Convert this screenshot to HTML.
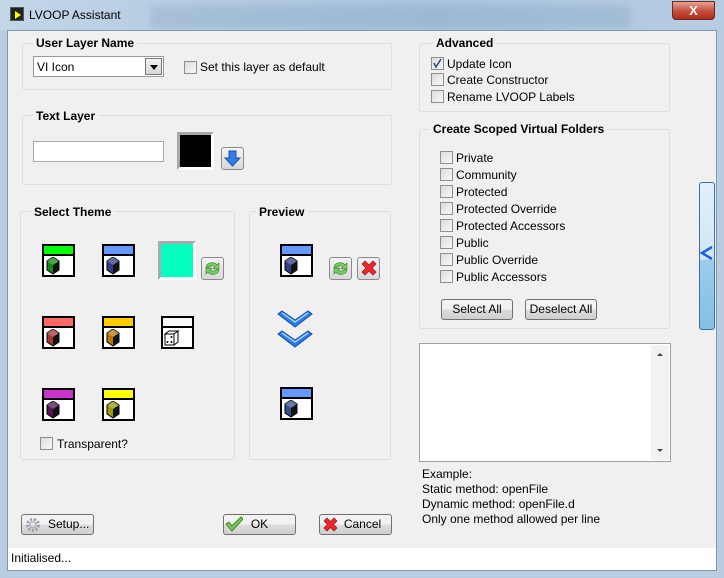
<!DOCTYPE html>
<html><head><meta charset="utf-8"><style>
*{margin:0;padding:0;box-sizing:border-box}
body{width:724px;height:578px;overflow:hidden;position:relative;font-family:"Liberation Sans",sans-serif;font-size:12px;color:#000;background:#b9cde0}
.a{position:absolute}
.grp{position:absolute;border:1px solid #d5dfe8;border-radius:3px}
.gt{position:absolute;font-weight:bold;background:#f0f0f0;padding:0 3px;font-size:12px;line-height:14px}
.cb{position:absolute;width:13px;height:13px;border:1px solid #8f8f8f;background:linear-gradient(135deg,#dcdcdc,#f8f8f8)}
.lb{position:absolute;line-height:14px;white-space:nowrap}
.btn{position:absolute;height:21px;border:1px solid #707070;border-radius:3px;background:linear-gradient(#f2f2f2 50%,#dddddd 50%,#cfcfcf);text-align:center;line-height:19px}
.ib{position:absolute;width:23px;height:23px;border:1px solid #8a8a8a;border-radius:3px;background:linear-gradient(#f4f4f4,#d8d8d8)}
.ic{position:absolute;width:33px;height:33px;border:2px solid #000;background:#fff}
.ic .band{height:10px;border-bottom:2px solid #000}
</style></head><body>
<div class="a" style="left:0;top:0;width:724px;height:30px;background:linear-gradient(90deg,#c3d6e8,#b3cbe2 30%,#a9c4de 60%,#b7cde3)"></div>
<div class="a" style="left:150px;top:6px;width:480px;height:22px;background:rgba(120,150,180,.25);filter:blur(3px)"></div>
<div class="a" style="left:10px;top:7px;width:14px;height:14px;background:#222;border:1px solid #555"><div style="margin:3px 0 0 4px;width:0;height:0;border-left:6px solid #ff0;border-top:4px solid transparent;border-bottom:4px solid transparent"></div></div>
<div class="lb" style="left:29px;top:8px;font-size:12px">LVOOP Assistant</div>
<div class="a" style="left:672px;top:1px;width:43px;height:19px;border:1px solid #6b2a20;border-radius:0 0 4px 4px;background:linear-gradient(#e8a496,#c75243 50%,#b02a18);color:#fff;font-weight:bold;text-align:center;line-height:17px;font-size:13px">X</div>
<div class="a" style="left:7px;top:30px;width:710px;height:541px;border:1px solid #8298b0;background:#f0f0f0"></div>
<div class="a" style="left:8px;top:548px;width:708px;height:22px;background:#fff"></div>
<div class="lb" style="left:11px;top:551px">Initialised...</div>

<div class="grp" style="left:22px;top:43px;width:370px;height:47px"></div>
<div class="gt" style="left:33px;top:36px">User Layer Name</div>
<div class="a" style="left:33px;top:56px;width:131px;height:21px;border:1px solid #999;background:#fff"></div>
<div class="lb" style="left:37px;top:60px">VI Icon</div>
<div class="a" style="left:145px;top:58px;width:17px;height:17px;border:1px solid #777;background:linear-gradient(#f4f4f4,#d6d6d6)"><div style="margin:6px 0 0 4px;width:0;height:0;border-left:4px solid transparent;border-right:4px solid transparent;border-top:5px solid #000"></div></div>
<div class="cb" style="left:184px;top:61px"></div>
<div class="lb" style="left:200px;top:60px">Set this layer as default</div>

<div class="grp" style="left:22px;top:115px;width:370px;height:70px"></div>
<div class="gt" style="left:33px;top:109px">Text Layer</div>
<div class="a" style="left:33px;top:141px;width:131px;height:21px;border:1px solid #aaa;background:#fff"></div>
<div class="a" style="left:177px;top:132px;width:37px;height:38px;border-top:3px solid #a8a8a8;border-left:3px solid #a8a8a8;border-right:3px solid #fff;border-bottom:3px solid #fff;background:#000"></div>
<div class="ib" style="left:221px;top:147px"><svg width="21" height="21" viewBox="0 0 21 21"><path d="M7 3h7v7h4l-7.5 8L3 10h4z" fill="#2f7fe0" stroke="#1a4fa8"/></svg></div>

<div class="grp" style="left:20px;top:211px;width:215px;height:249px"></div>
<div class="gt" style="left:31px;top:205px">Select Theme</div>
<div class="grp" style="left:249px;top:211px;width:142px;height:249px"></div>
<div class="gt" style="left:256px;top:205px">Preview</div>

<svg width="0" height="0" style="position:absolute"><defs>
<g id="cube"><path d="M1 4l6-4 6 4v9l-6 4-6-4z" fill="currentColor" stroke="#000" stroke-width="1"/><path d="M7 8l6-4v9l-6 4z" fill="#111"/><path d="M1 4l6-4 6 4-6 4z" fill="#fff" opacity=".25"/></g>
</defs></svg>

<div class="ic" style="left:42px;top:244px"><div class="band" style="background:#00ff00"></div><svg class="a" style="left:2px;top:11px;color:#118811" width="15" height="19"><use href="#cube"/></svg></div>
<div class="ic" style="left:102px;top:244px"><div class="band" style="background:#6699ff"></div><svg class="a" style="left:2px;top:11px;color:#333c88" width="15" height="19"><use href="#cube"/></svg></div>
<div class="a" style="left:158px;top:241px;width:38px;height:39px;border-top:3px solid #aaa;border-left:3px solid #aaa;border-right:3px solid #fff;border-bottom:3px solid #fff;background:#00ffc0"></div>
<div class="ib" style="left:201px;top:257px"><svg width="21" height="21"><path d="M4 9a6 5 0 0 1 11-2l2-2v6h-6l2-2a4 3 0 0 0-7 1z M17 12a6 5 0 0 1-11 2l-2 2v-6h6l-2 2a4 3 0 0 0 7-1z" fill="#7acb6a" stroke="#3e8a36" stroke-width=".7"/></svg></div>

<div class="ic" style="left:42px;top:316px"><div class="band" style="background:#ff6666"></div><svg class="a" style="left:2px;top:11px;color:#aa3333" width="15" height="19"><use href="#cube"/></svg></div>
<div class="ic" style="left:102px;top:316px"><div class="band" style="background:#ffcc00"></div><svg class="a" style="left:2px;top:11px;color:#bb7700" width="15" height="19"><use href="#cube"/></svg></div>
<div class="ic" style="left:161px;top:316px"><div class="band" style="background:#f8f8f8"></div><svg class="a" style="left:1px;top:11px" width="18" height="19"><path d="M1 5l4-3h9l-4 3z M1 5h9v11H1z M10 5l4-3v11l-4 3z" fill="#fff" stroke="#000"/><circle cx="3.5" cy="13" r="1" /><circle cx="7.5" cy="8" r="1"/><circle cx="7.5" cy="13" r="1"/></svg></div>

<div class="ic" style="left:42px;top:388px"><div class="band" style="background:#cc33cc"></div><svg class="a" style="left:2px;top:11px;color:#551155" width="15" height="19"><use href="#cube"/></svg></div>
<div class="ic" style="left:102px;top:388px"><div class="band" style="background:#ffff00"></div><svg class="a" style="left:2px;top:11px;color:#999900" width="15" height="19"><use href="#cube"/></svg></div>
<div class="cb" style="left:40px;top:437px"></div>
<div class="lb" style="left:57px;top:437px">Transparent?</div>

<div class="ic" style="left:280px;top:244px"><div class="band" style="background:#6699ff"></div><svg class="a" style="left:2px;top:11px;color:#333c88" width="15" height="19"><use href="#cube"/></svg></div>
<div class="ib" style="left:329px;top:257px"><svg width="21" height="21"><path d="M4 9a6 5 0 0 1 11-2l2-2v6h-6l2-2a4 3 0 0 0-7 1z M17 12a6 5 0 0 1-11 2l-2 2v-6h6l-2 2a4 3 0 0 0 7-1z" fill="#7acb6a" stroke="#3e8a36" stroke-width=".7"/></svg></div>
<div class="ib" style="left:357px;top:257px"><svg width="21" height="21"><path d="M4 6l3-3 4 4 4-4 3 3-4 4 4 4-3 3-4-4-4 4-3-3 4-4z" fill="#e8282a" stroke="#9a1010" stroke-width=".7"/></svg></div>
<svg class="a" style="left:277px;top:310px" width="37" height="42"><path d="M1 4l4-3 13 9 13-9 4 3-17 13z" fill="#2c7ae8" stroke="#1350b0"/><path d="M1 24l4-3 13 9 13-9 4 3-17 13z" fill="#2c7ae8" stroke="#1350b0"/><path d="M5 3l13 9 13-9" fill="none" stroke="#a8d0ff" stroke-width="1.5"/><path d="M5 23l13 9 13-9" fill="none" stroke="#a8d0ff" stroke-width="1.5"/></svg>
<div class="ic" style="left:280px;top:387px"><div class="band" style="background:#6699ff"></div><svg class="a" style="left:2px;top:11px;color:#33508a" width="15" height="19"><use href="#cube"/></svg></div>

<div class="grp" style="left:419px;top:43px;width:251px;height:69px"></div>
<div class="gt" style="left:433px;top:36px">Advanced</div>
<div class="cb" style="left:431px;top:57px"><svg width="11" height="11" style="position:absolute;left:0;top:0"><path d="M2 5l2 4 5-8" fill="none" stroke="#3a4f8a" stroke-width="1.6"/></svg></div>
<div class="lb" style="left:447px;top:57px">Update Icon</div>
<div class="cb" style="left:431px;top:73px"></div>
<div class="lb" style="left:447px;top:73px">Create Constructor</div>
<div class="cb" style="left:431px;top:90px"></div>
<div class="lb" style="left:447px;top:90px">Rename LVOOP Labels</div>

<div class="grp" style="left:419px;top:129px;width:251px;height:200px"></div>
<div class="gt" style="left:430px;top:122px">Create Scoped Virtual Folders</div>
<div class="cb" style="left:440px;top:151px"></div><div class="lb" style="left:456px;top:151px">Private</div>
<div class="cb" style="left:440px;top:168px"></div><div class="lb" style="left:456px;top:168px">Community</div>
<div class="cb" style="left:440px;top:185px"></div><div class="lb" style="left:456px;top:185px">Protected</div>
<div class="cb" style="left:440px;top:202px"></div><div class="lb" style="left:456px;top:202px">Protected Override</div>
<div class="cb" style="left:440px;top:219px"></div><div class="lb" style="left:456px;top:219px">Protected Accessors</div>
<div class="cb" style="left:440px;top:236px"></div><div class="lb" style="left:456px;top:236px">Public</div>
<div class="cb" style="left:440px;top:253px"></div><div class="lb" style="left:456px;top:253px">Public Override</div>
<div class="cb" style="left:440px;top:270px"></div><div class="lb" style="left:456px;top:270px">Public Accessors</div>
<div class="btn" style="left:441px;top:299px;width:72px">Select All</div>
<div class="btn" style="left:525px;top:299px;width:72px">Deselect All</div>

<div class="a" style="left:419px;top:343px;width:252px;height:119px;border:1px solid #a0a0a0;background:#fff"></div>
<div class="a" style="left:651px;top:345px;width:18px;height:115px;background:#f2f2f2"></div>
<div class="a" style="left:657px;top:353px;width:0;height:0;border-left:3px solid transparent;border-right:3px solid transparent;border-bottom:3px solid #444"></div>
<div class="a" style="left:657px;top:449px;width:0;height:0;border-left:3px solid transparent;border-right:3px solid transparent;border-top:3px solid #444"></div>
<div class="lb" style="left:422px;top:467px;line-height:15px">Example:<br>Static method: openFile<br>Dynamic method: openFile.d<br>Only one method allowed per line</div>

<div class="a" style="left:699px;top:182px;width:16px;height:148px;border:1px solid #3d6f9c;border-radius:3px;background:linear-gradient(#e2f0fa,#cfe6f6 52%,#9ccdeb 53%,#84bfe4)"></div>
<svg class="a" style="left:700px;top:245px" width="14" height="16"><path d="M12 2L2 8l10 6" fill="none" stroke="#1c5fe0" stroke-width="2.5"/></svg>

<div class="btn" style="left:21px;top:514px;width:73px;text-align:left;padding-left:26px">Setup...</div>
<svg class="a" style="left:25px;top:517px" width="16" height="16"><circle cx="8" cy="8" r="5.5" fill="none" stroke="#9aa0aa" stroke-width="3" stroke-dasharray="2.2 1.6"/><circle cx="8" cy="8" r="3" fill="none" stroke="#9aa0aa"/></svg>
<div class="btn" style="left:223px;top:514px;width:73px">OK</div>
<svg class="a" style="left:225px;top:516px" width="18" height="16"><path d="M1 8l3-2 3 4 9-9 2 2-11 12z" fill="#7ccb5a" stroke="#3b8a25"/></svg>
<div class="btn" style="left:319px;top:514px;width:73px;padding-left:14px">Cancel</div>
<svg class="a" style="left:322px;top:516px" width="17" height="17"><path d="M2 5l3-3 3.5 3.5L12 2l3 3-3.5 3.5L15 12l-3 3-3.5-3.5L5 15l-3-3 3.5-3.5z" fill="#e8282a" stroke="#9a1010" stroke-width=".7"/></svg>
</body></html>
